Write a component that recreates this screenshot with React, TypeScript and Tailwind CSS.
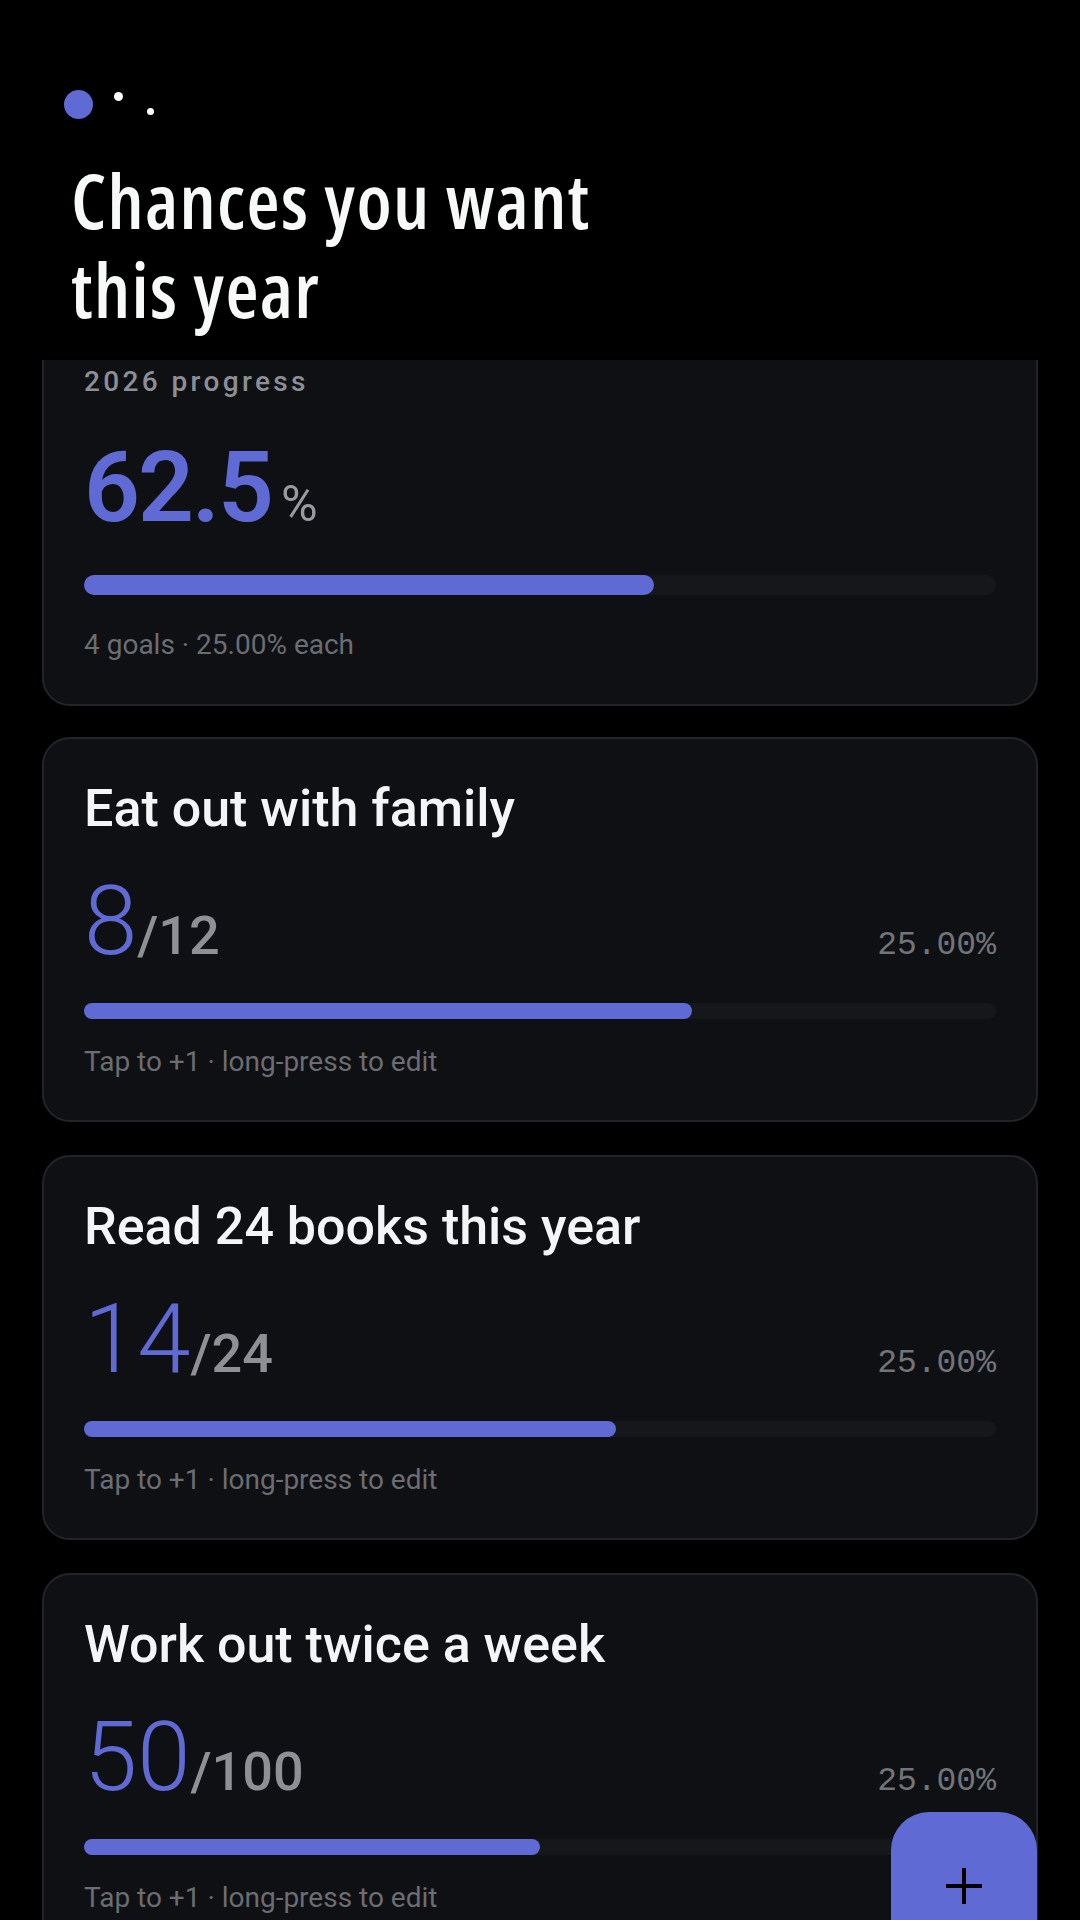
import React from 'react';

type Goal = {
  title: string;
  done: number;
  total: number;
};

const goals: Goal[] = [
  { title: 'Eat out with family', done: 8, total: 12 },
  { title: 'Read 24 books this year', done: 14, total: 24 },
  { title: 'Work out twice a week', done: 50, total: 100 },
  { title: 'Learn to cook new dishes', done: 9, total: 12 },
];

const ACCENT = 'bg-[#5f6ad4]';

const SummaryCard: React.FC<{ percent: number; count: number }> = ({ percent, count }) => (
  <div className="-mt-[38px] mb-[-2px] shrink-0 rounded-[28px] border-2 border-[#23242a] bg-[#0f1013] px-[40px] pt-[40px] pb-[41px]">
    <div className="text-[28px] leading-[36px] font-medium tracking-[0.12em] text-[#8c8f95]">2026 progress</div>
    <div className="mt-[39px] flex items-baseline">
      <span className="text-[98px] leading-none font-semibold tracking-[-0.02em] text-[#5f6ad4]">{percent}</span>
      <span className="ml-[9px] text-[50px] leading-none text-[#989aa0]">%</span>
    </div>
    <div className="mt-[38px] h-[20px] w-full rounded-full bg-[#16171a]">
      <div className={`h-full rounded-full ${ACCENT}`} style={{ width: `${percent}%` }} />
    </div>
    <p className="mt-[32px] text-[28px] leading-[36px] text-[#6b6d73]">
      {count} goals · {(100 / count).toFixed(2)}% each
    </p>
  </div>
);

const GoalCard: React.FC<{ goal: Goal; share: number }> = ({ goal, share }) => {
  const pct = (goal.done / goal.total) * 100;
  return (
    <div className="shrink-0 rounded-[28px] border-2 border-[#23242a] bg-[#0f1013] px-[40px] pt-[40px] pb-[40px]">
      <h2 className="text-[52px] leading-[60px] font-medium text-[#f4f5f6]">{goal.title}</h2>
      <div className="mt-[34px] flex items-baseline justify-between">
        <div className="flex items-baseline">
          <span className="text-[96px] leading-none font-light text-[#5f6ad4]">{goal.done}</span>
          <span className="text-[54px] leading-none font-medium text-[#8e9096]">/{goal.total}</span>
        </div>
        <span className="font-['Liberation_Mono',monospace] text-[33px] leading-none text-[#72747a]">
          {share.toFixed(2)}%
        </span>
      </div>
      <div className="mt-[34px] h-[16px] w-full rounded-full bg-[#16171a]">
        <div className={`h-full rounded-full ${ACCENT}`} style={{ width: `${pct}%` }} />
      </div>
      <p className="mt-[25px] text-[28px] leading-[36px] text-[#6b6d73]">Tap to +1 · long-press to edit</p>
    </div>
  );
};

export default function App() {
  const share = 100 / goals.length;
  const overall = goals.reduce((s, g) => s + (g.done / g.total) * share, 0);
  const percent = Math.round(overall * 10) / 10;

  return (
    <div className="relative h-[1920px] w-[1080px] overflow-hidden bg-black font-['Roboto',sans-serif]">
      <div className="flex h-full flex-col">
        {/* header */}
        <header className="h-[360px] shrink-0 bg-black pl-[64px] pt-[90px]">
          <div className="flex items-start">
            <span className="h-[29px] w-[29px] rounded-full bg-[#5f6ad4]" />
            <span className="ml-[21px] mt-[2px] h-[9px] w-[9px] rounded-full bg-white" />
            <span className="ml-[24px] mt-[18px] h-[7px] w-[7px] rounded-full bg-white" />
          </div>
          <h1 className="mt-[36px] ml-[7px] font-['Open_Sans',sans-serif] text-[76px] leading-[89px] font-semibold font-stretch-[75%] tracking-[1.3px] text-[#f7f8f8]">
            Chances you want
            <br />
            this year
          </h1>
        </header>

        {/* scrolled list */}
        <main className="min-h-0 flex-1 overflow-hidden px-[42px]">
          <div className="flex flex-col gap-[33px]">
            <SummaryCard percent={percent} count={goals.length} />
            {goals.map((g) => (
              <GoalCard key={g.title} goal={g} share={share} />
            ))}
          </div>
        </main>
      </div>

      {/* floating add button */}
      <button className="absolute left-[891px] top-[1812px] flex h-[146px] w-[146px] items-start justify-center rounded-[38px] bg-[#5f6ad4] pt-[55px]">
        <svg width="38" height="38" viewBox="0 0 38 38">
          <path d="M19 1v36M1 19h36" stroke="#000" strokeWidth="4" />
        </svg>
      </button>
    </div>
  );
}
